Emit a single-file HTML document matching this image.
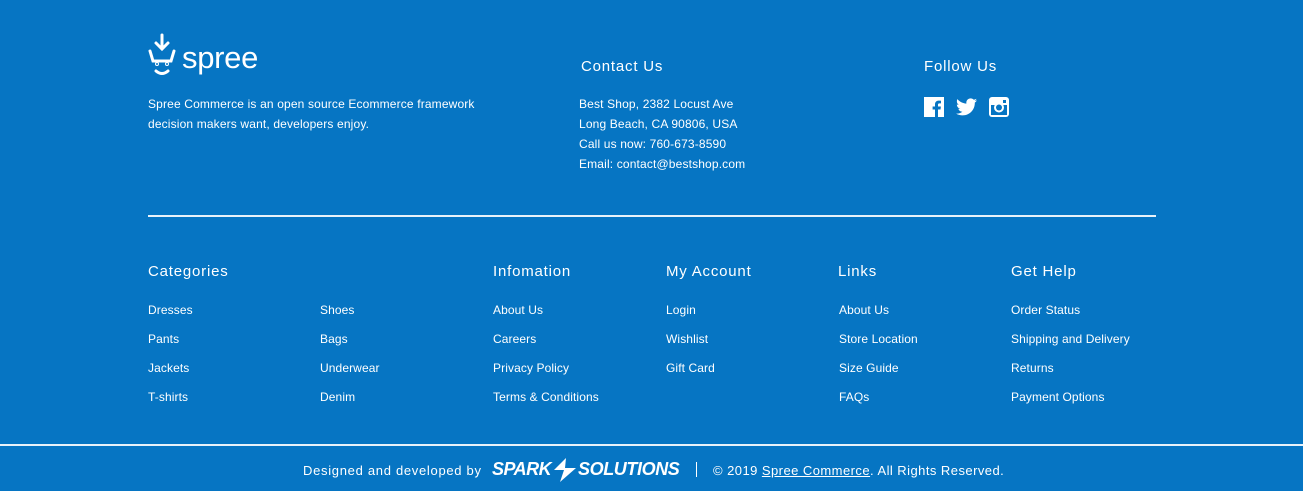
<!DOCTYPE html>
<html><head><meta charset="utf-8"><style>
*{margin:0;padding:0;box-sizing:border-box}
body{width:1303px;height:491px;background:#0675c3;color:#fff;font-family:"Liberation Sans",sans-serif;position:relative;overflow:hidden}
.a{position:absolute;white-space:nowrap}
.s{font-size:12px;line-height:20px;letter-spacing:0.15px}
.h{font-size:15px;letter-spacing:0.8px}
.l{font-size:12px;letter-spacing:0.1px}
</style></head><body>
<svg class="a" style="left:147px;top:33px" width="30" height="46" viewBox="0 0 30 46" fill="none" stroke="#fff" stroke-width="3" stroke-linecap="round">
<path d="M15 2v13M9 10l6 6 6-6"/><path d="M3 18l3 10h18l3-10"/><circle cx="10" cy="31" r="0.5"/><circle cx="20" cy="31" r="0.5"/><path d="M9 38q6 5 12 0"/></svg>
<div class="a" style="left:182px;top:41px;font-size:31px;line-height:34px;letter-spacing:-0.3px">spree</div>
<div class="a s" style="left:148px;top:94px">Spree Commerce is an open source Ecommerce framework<br>decision makers want, developers enjoy.</div>
<div class="a h" style="left:581px;top:58px">Contact Us</div>
<div class="a s" style="left:579px;top:94px">Best Shop, 2382 Locust Ave<br>Long Beach, CA 90806, USA<br>Call us now: 760-673-8590<br>Email: contact@bestshop.com</div>
<div class="a h" style="left:924px;top:58px">Follow Us</div>
<svg class="a" style="left:924px;top:97px" width="20" height="20" viewBox="0 0 20 20"><rect width="20" height="20" fill="#fff"/><path d="M14 20v-7.5h2.5l.4-3H14V7.8c0-.9.3-1.4 1.5-1.4H17V3.7c-.3 0-1.2-.1-2.2-.1-2.2 0-3.8 1.3-3.8 3.8v2.1H8.6v3H11V20z" fill="#0675c3"/></svg>
<svg class="a" style="left:956px;top:98px" width="21" height="18" viewBox="0 0 24 20"><path fill="#fff" d="M24 2.4c-.9.4-1.8.6-2.800.8 1-.6 1.8-1.6 2.200-2.700-1 .6-2 1-3.100 1.200C19.4.7 18.1.1 16.7.1c-2.7 0-4.9 2.2-4.9 4.900 0 .4 0 .8.1 1.100C7.7 5.900 4.100 4 1.700 1 1.200 1.700 1 2.600 1 3.500c0 1.700.9 3.200 2.200 4.100-.8 0-1.600-.2-2.200-.6v.1c0 2.400 1.700 4.400 3.900 4.800-.4.100-.8.200-1.300.200-.3 0-.6 0-.9-.1.600 2 2.400 3.400 4.600 3.400-1.700 1.300-3.800 2.100-6.100 2.100-.4 0-.8 0-1.200-.1 2.200 1.400 4.800 2.200 7.500 2.200 9.100 0 14-7.500 14-14v-.6c1-.7 1.800-1.600 2.500-2.600z"/></svg>
<svg class="a" style="left:989px;top:97px" width="20" height="20" viewBox="0 0 20 20"><rect width="20" height="20" rx="3" fill="#fff"/><rect x="2" y="8" width="16" height="10" fill="#0675c3"/><circle cx="10" cy="10.5" r="5" fill="#fff"/><circle cx="10" cy="10.5" r="3" fill="#0675c3"/><rect x="14" y="3" width="3" height="3" fill="#0675c3"/></svg>
<div class="a" style="left:148px;top:215px;width:1008px;height:2px;background:#e8f2fa"></div>
<div class="a h" style="left:148px;top:263px">Categories</div>
<div class="a h" style="left:493px;top:263px">Infomation</div>
<div class="a h" style="left:666px;top:263px">My Account</div>
<div class="a h" style="left:838px;top:263px">Links</div>
<div class="a h" style="left:1011px;top:263px">Get Help</div>
<div class="a l" style="left:148px;top:296px;line-height:29px">Dresses<br>Pants<br>Jackets<br>T-shirts</div>
<div class="a l" style="left:320px;top:296px;line-height:29px">Shoes<br>Bags<br>Underwear<br>Denim</div>
<div class="a l" style="left:493px;top:296px;line-height:29px">About Us<br>Careers<br>Privacy Policy<br>Terms &amp; Conditions</div>
<div class="a l" style="left:666px;top:296px;line-height:29px">Login<br>Wishlist<br>Gift Card</div>
<div class="a l" style="left:839px;top:296px;line-height:29px">About Us<br>Store Location<br>Size Guide<br>FAQs</div>
<div class="a l" style="left:1011px;top:296px;line-height:29px">Order Status<br>Shipping and Delivery<br>Returns<br>Payment Options</div>
<div class="a" style="left:0;top:444px;width:1303px;height:2px;background:#e8f2fa"></div>
<div class="a" style="left:303px;top:463px;font-size:13px;letter-spacing:0.7px">Designed and developed by</div>
<div class="a" style="left:492px;top:459px;font-size:18px;font-weight:bold;font-style:italic;letter-spacing:-0.5px">SPARK</div>
<svg class="a" style="left:552px;top:458px" width="26" height="24" viewBox="0 0 26 24"><path fill="#fff" d="M14 0L2 12h10l-4 12 16-14H13z"/></svg>
<div class="a" style="left:578px;top:459px;font-size:18px;font-weight:bold;font-style:italic;letter-spacing:-0.4px">SOLUTIONS</div>
<div class="a" style="left:696px;top:462px;width:1px;height:15px;background:#fff"></div>
<div class="a" style="left:713px;top:463px;font-size:13px;letter-spacing:0.45px">© 2019 <span style="text-decoration:underline">Spree Commerce</span>. All Rights Reserved.</div>
</body></html>
